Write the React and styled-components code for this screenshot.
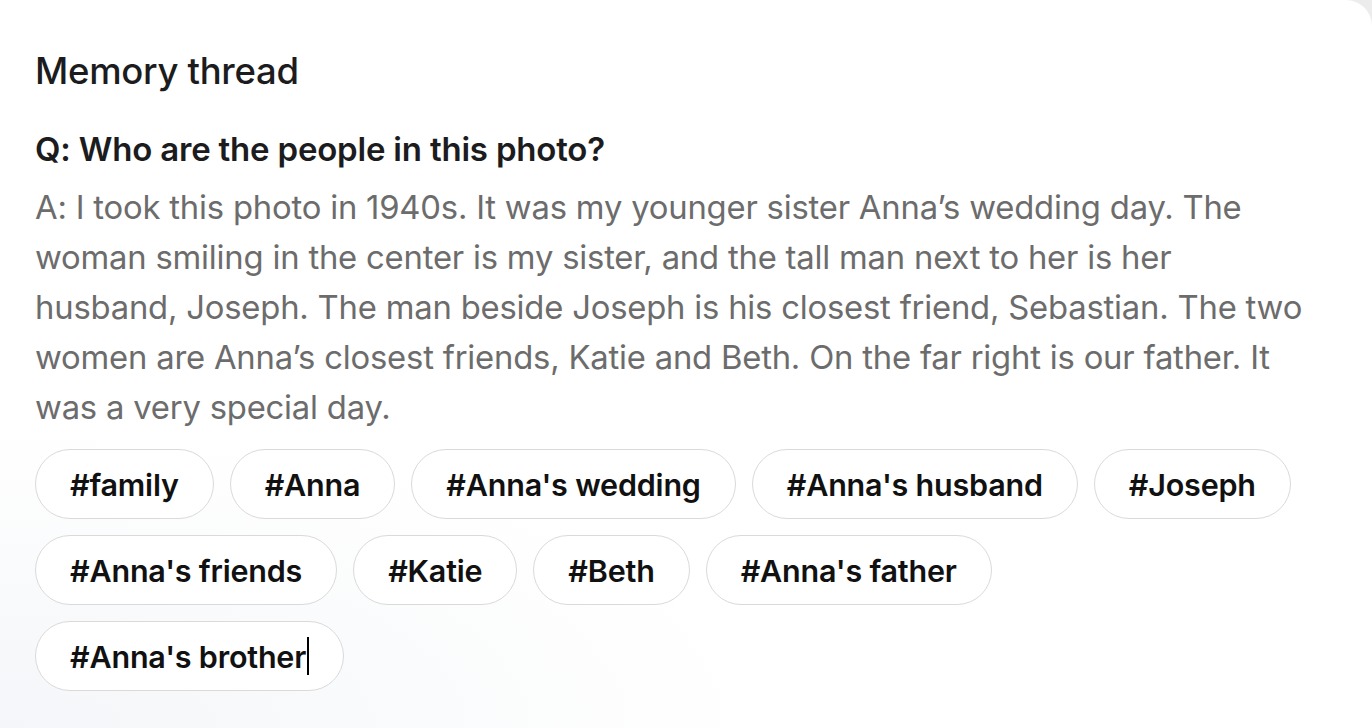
import React from "react";
import styled, { createGlobalStyle } from "styled-components";

const Global = createGlobalStyle`
  html, body { margin: 0; padding: 0; background: #ececec; }
  body { font-family: Inter, "Liberation Sans", sans-serif; }
`;

const Card = styled.div`
  width: 1372px;
  height: 728px;
  box-sizing: border-box;
  background: radial-gradient(ellipse 760px 300px at 0% 100%, #f5f6f9 0%, #fafbfc 55%, #ffffff 100%);
  border-top-right-radius: 26px;
  padding: 48px 0 0 35px;
  overflow: hidden;
`;

const Title = styled.h1`
  margin: 0;
  font-size: 36.5px;
  font-weight: 500;
  color: #1c1c1e;
  line-height: 46px;
  letter-spacing: -0.3px;
`;

const Question = styled.h2`
  margin: 34px 0 0;
  font-size: 33px;
  font-weight: 600;
  color: #1c1c1e;
  line-height: 42px;
  letter-spacing: -0.2px;
`;

const Answer = styled.p`
  margin: 12px 0 0;
  max-width: 1320px;
  font-size: 32.8px;
  font-weight: 400;
  color: #6c6c6c;
  line-height: 50px;
  letter-spacing: -0.2px;
`;

const Tags = styled.div`
  display: flex;
  flex-wrap: wrap;
  gap: 16px;
  margin-top: 17px;
  width: 1268px;
`;

const Tag = styled.span`
  display: inline-flex;
  align-items: center;
  height: 70px;
  box-sizing: border-box;
  padding: 0 34px;
  border: 1.5px solid #dadada;
  border-radius: 35px;
  background: #fff;
  font-size: 30.5px;
  font-weight: 600;
  color: #111;
  letter-spacing: -0.2px;
`;

const Caret = styled.span`
  display: inline-block;
  width: 2px;
  height: 38px;
  background: #000;
  margin-left: 1px;
`;

const tags = [
  "#family",
  "#Anna",
  "#Anna's wedding",
  "#Anna's husband",
  "#Joseph",
  "#Anna's friends",
  "#Katie",
  "#Beth",
  "#Anna's father",
];

export default function App() {
  return (
    <>
      <Global />
      <Card>
        <Title>Memory thread</Title>
        <Question>Q: Who are the people in this photo?</Question>
        <Answer>
          A: I took this photo in 1940s. It was my younger sister Anna’s wedding day. The
          <br />
          woman smiling in the center is my sister, and the tall man next to her is her
          <br />
          husband, Joseph. The man beside Joseph is his closest friend, Sebastian. The two
          <br />
          women are Anna’s closest friends, Katie and Beth. On the far right is our father. It
          <br />
          was a very special day.
        </Answer>
        <Tags>
          {tags.map((t) => (
            <Tag key={t}>{t}</Tag>
          ))}
          <Tag>
            #Anna's brother
            <Caret />
          </Tag>
        </Tags>
      </Card>
    </>
  );
}
